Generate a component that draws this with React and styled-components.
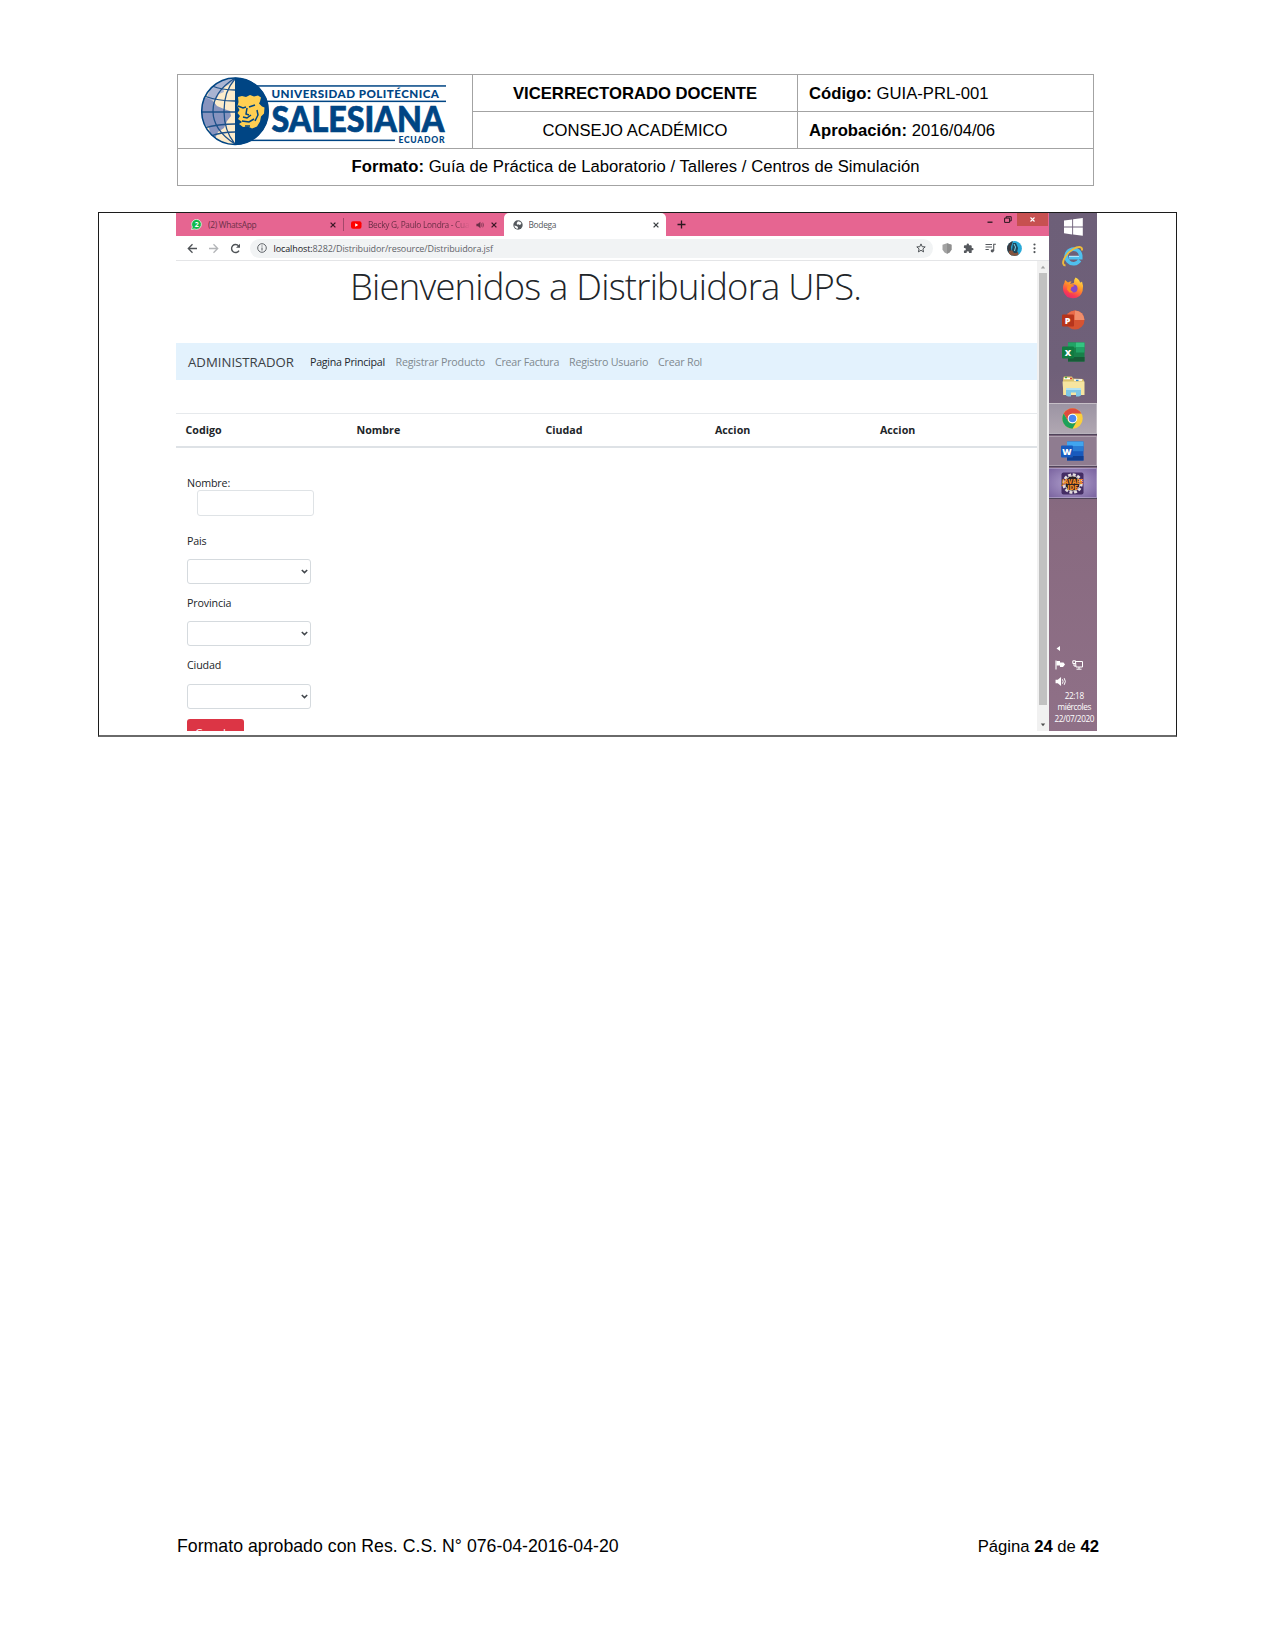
import React from "react";
import styled, { createGlobalStyle, css } from "styled-components";

const Global = createGlobalStyle`
  * { box-sizing: border-box; }
  body { margin: 0; background: #fff; }
`;

const ui = css`
  font-family: "Open Sans", "Noto Sans", sans-serif;
  white-space: nowrap;
`;

const Page = styled.div`
  width: 1275px;
  height: 1650px;
  display: flex;
  flex-direction: column;
  overflow: hidden;
  background: #fff;
  color: #000;
  font-family: "Liberation Sans", Arial, sans-serif;
  font-size: 16.67px;
`;

/* ---------- document header ---------- */
const HeaderTable = styled.div`
  width: 917px;
  height: 112px;
  margin: 74px 0 0 177px;
  display: grid;
  grid-template-columns: 294px 324px 295px;
  grid-template-rows: 36px 36px 36px;
  gap: 1px;
  padding: 1px;
  background: #a3a3a3;
`;
const Cell = styled.div`
  display: flex;
  align-items: center;
  justify-content: ${(p) => (p.$left ? "flex-start" : "center")};
  padding: ${(p) => (p.$left ? "2px 0 0 11px" : "2px 0 0")};
  background: #fff;
  white-space: pre;
  letter-spacing: ${(p) => p.$track || 0}px;
`;
const LogoCell = styled(Cell)`
  grid-row: span 2;
  justify-content: flex-start;
  padding: 0 0 1px 22px;
`;
const WideCell = styled(Cell)`
  grid-column: 1 / -1;
  padding: 0;
`;

/* ---------- frame ---------- */
const Frame = styled.div`
  width: 1079px;
  height: 525px;
  margin: 26px 0 0 98px;
  border: 1px solid #1c1c1c;
  border-bottom: 2px solid #6a6a6a;
  padding: 0 0 0 77px;
`;
const Shot = styled.div`
  width: 921px;
  height: 518px;
  display: grid;
  grid-template-columns: 873px 48px;
  overflow: hidden;
`;
const Browser = styled.div`
  display: flex;
  flex-direction: column;
  height: 518px;
  overflow: hidden;
  background: #fff;
`;

const TabStrip = styled.div`
  height: 23px;
  display: flex;
  background: #e66591;
`;
const Tab = styled.div`
  ${ui}
  width: ${(p) => p.$w}px;
  height: 23px;
  display: flex;
  align-items: center;
  padding: 0 7.5px 0 ${(p) => p.$pl}px;
  font-size: 8.4px;
  letter-spacing: ${(p) => p.$track || 0}px;
  color: ${(p) => (p.$active ? "#55585c" : "#6b2f47")};
  background: ${(p) => (p.$active ? "#fff" : "transparent")};
  border-radius: ${(p) => (p.$active ? "5px 5px 0 0" : "0")};
`;
const TabTitle = styled.span`
  flex: 1;
  min-width: 0;
  overflow: hidden;
  margin-left: 6px;
  ${(p) => p.$fade && "mask-image: linear-gradient(90deg, #000 84%, transparent);"}
`;
const TabDivider = styled.div`
  width: 1px;
  height: 13px;
  margin-top: 5px;
  background: #a3486a;
`;
const NewTab = styled.div`
  width: 30px;
  display: flex;
  align-items: center;
  justify-content: center;
`;
const WindowButtons = styled.div`
  margin-left: auto;
  padding-right: 1.5px;
  display: flex;
  height: 13px;
`;
const WinButton = styled.div`
  width: ${(p) => p.$w}px;
  height: 13px;
  display: flex;
  align-items: center;
  justify-content: center;
  background: ${(p) => (p.$close ? "#c75050" : "transparent")};
`;

const Toolbar = styled.div`
  height: 25px;
  display: flex;
  align-items: center;
  border-bottom: 1px solid #e4e5e7;
`;
const NavButtons = styled.div`
  width: 74px;
  padding-left: 10.5px;
  display: flex;
  gap: 10.7px;
`;
const Omnibox = styled.div`
  ${ui}
  width: 683px;
  height: 19px;
  display: flex;
  align-items: center;
  padding: 0 7px 0 7px;
  border-radius: 10px;
  background: #f1f3f4;
  color: #5f6368;
  font-size: 9px;
  letter-spacing: ${(p) => p.$track}px;
`;
const Url = styled.span`
  flex: 1;
  margin-left: 6.5px;
  b { font-weight: 400; color: #202124; }
`;
const Extensions = styled.div`
  flex: 1;
  display: flex;
  align-items: center;
  justify-content: space-between;
  padding: 0 13px 0 9px;
`;

const Viewport = styled.div`
  flex: 1;
  display: grid;
  grid-template-columns: 861px 12px;
  min-height: 0;
`;
const Content = styled.div`
  ${ui}
  height: 470px;
  overflow: hidden;
  color: #212529;
  font-size: 10.7px;
`;
const Heading = styled.h1`
  margin: 0;
  height: 82px;
  line-height: 50px;
  padding-left: 174px;
  font-size: 36.4px;
  font-weight: 300;
  letter-spacing: ${(p) => p.$track}px;
`;
const Navbar = styled.nav`
  height: 37px;
  display: flex;
  align-items: center;
  padding: 1px 0 0 12px;
  background: #e3f2fd;
`;
const Brand = styled.div`
  width: 122px;
  font-size: 13.2px;
  letter-spacing: ${(p) => p.$track}px;
  color: #3a4045;
`;
const NavLink = styled.div`
  width: ${(p) => p.$w}px;
  letter-spacing: ${(p) => p.$track}px;
  color: ${(p) => (p.$active ? "#23282d" : "#80898f")};
`;
const TableHead = styled.div`
  height: 35px;
  margin-top: 33px;
  padding: 0 0 1px 9.5px;
  display: grid;
  grid-template-columns: 171px 189px 169.5px 165px 1fr;
  align-items: center;
  border-top: 1px solid #e6e9ec;
  border-bottom: 2px solid #dee2e6;
  font-weight: 700;
`;
const Form = styled.div`
  padding: 28px 0 0 11px;
  display: flex;
  flex-direction: column;
  letter-spacing: ${(p) => p.$track}px;
`;
const Label = styled.label`
  height: ${(p) => p.$h || 15}px;
  line-height: 15px;
  margin-top: ${(p) => p.$mt || 0}px;
`;
const Input = styled.div`
  width: 117px;
  height: 26px;
  margin-left: 10px;
  border: 1px solid #dfe3e6;
  border-radius: 3px;
`;
const Select = styled.div`
  width: 124px;
  height: 25px;
  margin-top: 10px;
  border: 1px solid #d5dade;
  border-radius: 3px;
  display: flex;
  align-items: center;
  justify-content: flex-end;
  padding-right: 2.5px;
`;
const Submit = styled.div`
  width: 57px;
  height: 25px;
  margin-top: 10px;
  border-radius: 3px;
  background: #dc3545;
  color: #fff;
  line-height: 28px;
  text-align: center;
`;

const Scrollbar = styled.div`
  height: 470px;
  background: #f1f1f1;
  display: flex;
  flex-direction: column;
  align-items: center;
  padding: 4px 0;
`;
const Thumb = styled.div`
  width: 8px;
  height: 432px;
  margin: 4px 0 auto;
  background: #c1c1c1;
`;

/* ---------- taskbar ---------- */
const Taskbar = styled.div`
  height: 518px;
  display: flex;
  flex-direction: column;
  background: linear-gradient(#6d5f78 0%, #6f6079 30%, #886a80 58%, #8f7087 100%);
`;
const TaskButton = styled.div`
  height: ${(p) => p.$h}px;
  display: flex;
  align-items: center;
  justify-content: center;
  ${(p) =>
    p.$tone &&
    css`
      background: ${p.$tone};
      border: 1px solid rgba(255, 255, 255, 0.28);
      border-width: 1px 1px 1px 0;
      margin-bottom: 2px;
      box-shadow: 0 1px 0 #50445a;
    `}
`;
const Tray = styled.div`
  margin-top: auto;
  padding: 0 0 7px 5.5px;
  display: flex;
  flex-direction: column;
`;
const TrayRow = styled.div`
  display: flex;
  align-items: center;
  gap: 6px;
  height: ${(p) => p.$h}px;
`;
const Clock = styled.div`
  ${ui}
  margin-left: -3px;
  font-size: 8.2px;
  line-height: 11.5px;
  letter-spacing: -0.4px;
  text-align: center;
  color: #fff;
`;

/* ---------- footer ---------- */
const Footer = styled.footer`
  margin: auto 0 93px;
  padding: 0 176px 0 177px;
  display: flex;
  align-items: baseline;
  justify-content: space-between;
  font-size: ${(p) => p.$size}px;
  line-height: 20px;
`;
const Approved = styled.span`
  font-size: 17.7px;
  letter-spacing: ${(p) => p.$track}px;
`;

/* ---------- drawings ---------- */
const Logo = () => (
  <svg width="248" height="72" viewBox="200 75 248 72">
    <defs>
      <clipPath id="west"><path d="M235 77.5a33.7 33.7 0 0 0 0 67.4z" /></clipPath>
    </defs>
    <g clipPath="url(#west)">
      <rect x="200" y="75" width="36" height="72" fill="#fdeccb" />
      <path d="M211 88q9-9 19-9l5 1-7 5-5 3 1 4-5 2-3 6-6 1-4-2z" fill="#aab4d2" />
      <path d="M200 98l7 0 6 3 4 5 7 3 6 2 1 5-4 5-3 7-6 4-3 7-4-2-2-9-5-4-4-8z" fill="#8794bf" />
      <g fill="none" stroke="#1d5189" strokeWidth="1.3">
        <path d="M235 78q-22 14-22 33t22 33M235 79q-11 12-11 32t11 33" />
        <path d="M204 96q14 5 31 5M201 112h34M204 128q14-4 31-4M212 86q10 4 23 4M211 136q10-4 24-4" />
      </g>
    </g>
    <circle cx="235" cy="111.2" r="33.3" fill="none" stroke="#004584" strokeWidth="1.5" />
    <path d="M235 77.5a33.7 33.7 0 0 1 0 67.4z" fill="#004584" />
    <path d="M238 97l4 -1 4 1 4-2 4 1.500 4-1 3 2-1 4-1 2 3 3 2.500 1-.5 6-3 3-1 5-3 5-5 2-4-2-5 .5-4-3 3-2-4-3 2-3-2.500-3 2-3-2-4 1-4z" fill="#ffcf52" />
    <path d="M238 106l5 2 3-1M249 107l6-2M243 117l4 1 4-3M242 121l7 1 5-3M245 126l5 0M257 110l1 5-3 6M247 108l-1 6 3 1" fill="none" stroke="#004584" strokeWidth="1.5" />
    <g fill="#004584">
      <rect x="257" y="85.2" width="189" height="1.5" />
      <rect x="266" y="100.6" width="180" height="1.5" />
      <rect x="250" y="139.6" width="145" height="1.5" />
    </g>
    <g fill="#004584" fontFamily="Lato, sans-serif">
      <text x="271.5" y="98.2" fontSize="11.6" fontWeight="900" textLength="167.5">UNIVERSIDAD POLITÉCNICA</text>
      <text x="271.500" y="131.8" fontSize="36" fontWeight="900" stroke="#004584" strokeWidth=".7" textLength="173" lengthAdjust="spacingAndGlyphs">SALESIANA</text>
      <text x="398.5" y="142.8" fontSize="8.6" fontWeight="900" textLength="46">ECUADOR</text>
    </g>
  </svg>
);

const Svg = ({ w, h = w, vb, children }) => (
  <svg width={w} height={h} viewBox={vb || `0 0 ${w} ${h}`} style={{ flex: "none" }}>{children}</svg>
);
const Cross = ({ s = 6, color = "#3b2630", sw = 1.3 }) => (
  <Svg w={s} vb="0 0 6 6"><path d="M.6.6l4.8 4.8M5.4.6L.6 5.4" stroke={color} strokeWidth={sw} /></Svg>
);
const WhatsApp = () => (
  <Svg w={11}>
    <path d="M5.6.4a5 5 0 1 1-2.4 9.5L.5 10.600l.8-2.700A5 5 0 0 1 5.600.4z" fill="#12b94b" stroke="#e9f7ec" strokeWidth=".8" />
    <text x="5.600" y="8" fontSize="7" fontWeight="700" fontFamily="Open Sans, sans-serif" fill="#fff" textAnchor="middle">2</text>
  </Svg>
);
const YouTube = () => (
  <Svg w={11} h={8}><rect width="10.500" height="7.500" y=".3" rx="2" fill="#f00" /><path d="M4.200 2.300v3.500l3-1.700z" fill="#fff" /></Svg>
);
const Speaker = ({ s = 8, color = "#6b2f47" }) => (
  <Svg w={s} vb="0 0 10 10"><path d="M.5 3.500h2L5.500.8v8.400l-3-2.700h-2z" fill={color} /><path d="M6.800 3q1.200 2 0 4M8.400 2q2 3 0 6" fill="none" stroke={color} strokeWidth=".9" /></Svg>
);
const Globe = () => (
  <Svg w={10}><circle cx="5" cy="5" r="4.700" fill="#54585d" /><path d="M1.300 5.500l2 .4 1.700 1.200-.4 1.800Q1.800 8.500 1.300 5.500zM5 1.200l2.500.8.900 1.700-1.500 1.200-1.600-.6-1.300.4L3.700 3z" fill="#fff" /></Svg>
);
const Arrow = ({ flip, color }) => (
  <Svg w={11}>
    <path transform={flip ? "matrix(-1 0 0 1 11 0)" : undefined} d="M10 5.500H1.500M5.500 1.300L1.300 5.500l4.200 4.200" fill="none" stroke={color} strokeWidth="1.300" />
  </Svg>
);
const Reload = () => (
  <Svg w={11}><path d="M9 7.600A4 4 0 1 1 8.600 2.900" fill="none" stroke="#4f5357" strokeWidth="1.400" /><path d="M10 .8v4H6z" fill="#4f5357" /></Svg>
);
const Info = () => (
  <Svg w={10}><circle cx="5" cy="5" r="4.300" fill="none" stroke="#5f6368" /><path d="M5 4.400v3M5 2.400v1.100" stroke="#5f6368" strokeWidth="1.100" /></Svg>
);
const Star = () => (
  <Svg w={10}><path d="M5 .9l1.200 2.800 3 .2-2.300 2 .7 3L5 7.300 2.400 8.900l.7-3L.8 3.900l3-.2z" fill="none" stroke="#4f5357" strokeWidth="1" /></Svg>
);
const Shield = () => (
  <Svg w={10} h={11}><path d="M5 .2l4.500 1.500v5L7.500 9.500 5 10.800 2.500 9.500l-2-2.800v-5z" fill="#a3a3a3" /><path d="M5 .2l4.500 1.500v5L7.500 9.500 5 10.800z" fill="#8f8f8f" /></Svg>
);
const Puzzle = () => (
  <Svg w={11} vb="0 0 24 24"><path d="M20.500 11H19V7a2 2 0 0 0-2-2h-4V3.500a2.500 2.500 0 0 0-5 0V5H4a2 2 0 0 0-2 2v3.800h1.500a2.700 2.700 0 0 1 0 5.400H2V20a2 2 0 0 0 2 2h3.800v-1.500a2.700 2.700 0 0 1 5.400 0V22H17a2 2 0 0 0 2-2v-4h1.500a2.500 2.500 0 0 0 0-5z" fill="#56595e" /></Svg>
);
const Playlist = () => (
  <Svg w={11} h={10}><path d="M.5 1.500H7M.5 4H7M.5 6.500h3.300M8.700 8V1.300h2.200" fill="none" stroke="#56595e" strokeWidth="1.100" /><circle cx="7.300" cy="7.800" r="1.600" fill="#56595e" /></Svg>
);
const Avatar = () => (
  <Svg w={15}>
    <clipPath id="av"><circle cx="7.500" cy="7.500" r="7.400" /></clipPath>
    <g clipPath="url(#av)">
      <rect width="15" height="15" fill="#28a9d8" />
      <path d="M0 0h6L4 6l1 9H0z" fill="#3b3a3f" />
      <path d="M2 10l4-1 5 2 1 4H2z" fill="#83543f" />
      <path d="M6 2l3 0 2 5-1 5-3 0-2-3z" fill="#1c475c" />
      <path d="M7 3l1.500 3-1 4" fill="none" stroke="#8ed3e4" />
    </g>
  </Svg>
);
const Dots = () => (
  <Svg w={3} h={11}><g fill="#4f5357"><circle cx="1.500" cy="1.500" r="1.100" /><circle cx="1.500" cy="5.300" r="1.100" /><circle cx="1.500" cy="9.100" r="1.100" /></g></Svg>
);
const Chevron = () => (
  <Svg w={7} h={5}><path d="M.8 1l2.700 2.600L6.200 1" fill="none" stroke="#41464b" strokeWidth="1.500" /></Svg>
);
const Tri = ({ down }) => (
  <Svg w={6} h={4}><path d={down ? "M.8.500h4.400L3 3.300z" : "M.8 3.500h4.400L3 .7z"} fill={down ? "#505050" : "#a3a3a3"} /></Svg>
);

const WindowsIcon = () => (
  <Svg w={19} h={18}><path d="M0 2.600l8.200-1.200v7.100H0zM9.100 1.200L18.800 0v8.500H9.100zM0 9.400h8.200v7L0 15.200zM9.100 9.400h9.700v8.400l-9.700-1.400z" fill="#fff" /></Svg>
);
const IE = () => (
  <Svg w={22} vb="0 0 22 22">
    <path d="M18.500 14.700a7.300 7.300 0 1 1 1-4.700v2.300H7.500" fill="none" stroke="#4fc0ee" strokeWidth="3.600" transform="translate(-.8 .5)" />
    <path d="M7 11.300h10" stroke="#c6efff" strokeWidth="1" />
    <path d="M3.500 20.500C-2 20 2.500 9.500 11 4.300c5-3.200 9.500-3.400 9 1.200" fill="none" stroke="#edbb3c" strokeWidth="1.900" />
  </Svg>
);
const Firefox = () => (
  <Svg w={22} vb="0 0 22 22">
    <defs><linearGradient id="ff" x1=".8" y1="0" x2=".3" y2="1"><stop offset="0" stopColor="#ffe64a" /><stop offset=".45" stopColor="#ff9328" /><stop offset=".8" stopColor="#fb3b52" /><stop offset="1" stopColor="#e22a72" /></linearGradient></defs>
    <path d="M13.500.5q4 2 4.500 5 1.500 0 2-1 2 5 .6 9.500A10 10 0 0 1 1.500 14.500Q0 10 2.500 5.500L3 3l3 2.500Q8 4 9.500 4.500L8 7l4-1q-.5-3 1.500-5.500z" fill="url(#ff)" />
    <circle cx="11.500" cy="11.500" r="4" fill="#8448c8" />
    <path d="M5.500 9l5-1.500 2 1.500-3 1-1 3 3 2.500-4 0-2.500-3z" fill="#ff8a22" />
  </Svg>
);
const Letter = ({ x = 5.600, y = 14, children }) => (
  <text x={x} y={y} fontSize="9" fontWeight="800" fontFamily="Open Sans, sans-serif" fill="#fff" textAnchor="middle">{children}</text>
);
const PowerPoint = () => (
  <Svg w={23} h={20}>
    <circle cx="13" cy="10" r="9.500" fill="#d65331" /><path d="M13 .5A9.500 9.500 0 0 1 22.500 10H13z" fill="#f08e6c" /><path d="M3.500 10A9.500 9.500 0 0 1 13 .5V10z" fill="#e96c4a" />
    <rect y="4.500" width="12" height="12" rx="1" fill="#b7351c" /><Letter y={13.800}>P</Letter>
  </Svg>
);
const Excel = () => (
  <Svg w={23} h={20}>
    <rect x="6" y=".5" width="16.500" height="19" fill="#18804a" /><rect x="6" y=".5" width="8" height="5" fill="#22a366" /><rect x="14" y=".5" width="8.500" height="5" fill="#33c481" /><rect x="14" y="5.500" width="8.500" height="5" fill="#21a165" /><rect x="6" y="15" width="16.500" height="4.500" fill="#165c37" />
    <rect y="4.500" width="12" height="12" rx="1" fill="#107c41" /><Letter x={6} y={13.800}>X</Letter>
  </Svg>
);
const Explorer = () => (
  <Svg w={23} h={21}>
    <path d="M1 2l1-1.500h8L11 2.500l10 .5 1 2v14H1z" fill="#dcc36d" /><path d="M2 2.500h8M12 4h8" stroke="#fff" strokeWidth="1.400" /><path d="M3 1.500h2" stroke="#45a543" strokeWidth="1.500" /><path d="M8 2.500h2" stroke="#d84532" strokeWidth="1.500" /><path d="M14 4.500h2.500" stroke="#3186cc" strokeWidth="1.500" />
    <path d="M.5 5.500h22V19H1.500z" fill="#f6e5a0" /><path d="M4 12h15v7.500l-2 1h-3v-4H9v4H6l-2-1z" fill="#7ec7e6" /><path d="M4 13h15" stroke="#c6ebf6" strokeWidth="1.500" />
  </Svg>
);
const Chrome = () => (
  <Svg w={21} vb="-10.500 -10.500 21 21">
    <circle r="10.200" fill="#fbcf3d" />
    <path d="M-8.830-5.100A10.200 10.200 0 0 1 8.830-5.100H0A5.100 5.100 0 0 0-4.420-2.550L-4.420 2.550z" fill="#dd4b3e" />
    <path d="M-8.830-5.100A10.200 10.200 0 0 0 0 10.200L4.420 2.550A5.100 5.100 0 0 1-4.420 2.550z" fill="#1da05c" />
    <circle r="4.800" fill="#fff" /><circle r="3.800" fill="#4a86ee" />
  </Svg>
);
const Word = () => (
  <Svg w={23} h={20}>
    <rect x="6" y=".5" width="16.500" height="19" fill="#185abd" /><rect x="6" y=".5" width="16.500" height="5" fill="#41a5ee" /><rect x="6" y="5.500" width="16.500" height="4.700" fill="#2b7cd3" /><rect x="6" y="15" width="16.500" height="4.500" fill="#103f91" />
    <rect y="4.500" width="12" height="12" rx="1" fill="#185abd" /><Letter x={6} y={13.800}>W</Letter>
  </Svg>
);
const JavaIde = () => (
  <Svg w={23} h={23}>
    <rect x=".5" y=".5" width="22" height="22" rx="2" fill="#442d64" />
    <circle cx="11.500" cy="11.500" r="9" fill="none" stroke="#e5e0e0" strokeWidth="2.500" strokeDasharray="3 1.710" />
    <circle cx="11.500" cy="11.500" r="7.600" fill="#2b2023" stroke="#d7d0cf" strokeWidth="1" />
    <g fontFamily="Open Sans, sans-serif" fontWeight="800" fill="#f28a26" textAnchor="middle">
      <text x="11.500" y="11.500" fontSize="6" textLength="21" lengthAdjust="spacingAndGlyphs">JAVAEE</text>
      <text x="11.500" y="17.500" fontSize="6.500">IDE</text>
    </g>
  </Svg>
);

const tabs = [
  { w: 167, pl: 15, icon: <WhatsApp />, title: "(2) WhatsApp", track: -0.3 },
  { w: 160, pl: 7, icon: <YouTube />, title: "Becky G, Paulo Londra - Cuando", sound: true, track: -0.3 },
  { w: 162, pl: 8.5, icon: <Globe />, title: "Bodega", active: true, track: -0.3 },
];
const links = [
  { t: "Pagina Principal", w: 85.5, track: -0.27, active: true },
  { t: "Registrar Producto", w: 99.5, track: -0.2 },
  { t: "Crear Factura", w: 74, track: -0.25 },
  { t: "Registro Usuario", w: 89, track: -0.2 },
  { t: "Crear Rol", w: 60, track: -0.2 },
];
const pinned = [
  { h: 27, icon: <WindowsIcon /> },
  { h: 31, icon: <IE /> },
  { h: 34, icon: <Firefox /> },
  { h: 30, icon: <PowerPoint /> },
  { h: 34, icon: <Excel /> },
  { h: 34, icon: <Explorer /> },
  { h: 31, icon: <Chrome />, tone: "linear-gradient(#9c94a3, #b0a7b2)" },
  { h: 30, icon: <Word />, tone: "#8f7c90" },
  { h: 30, icon: <JavaIde />, tone: "radial-gradient(#b3a3cf, #7a64a0)" },
];

export default function App() {
  return (
    <Page>
      <Global />
      <HeaderTable>
        <LogoCell><Logo /></LogoCell>
        <Cell><b>VICERRECTORADO DOCENTE</b></Cell>
        <Cell $left><b>Código:</b> GUIA-PRL-001</Cell>
        <Cell>CONSEJO ACADÉMICO</Cell>
        <Cell $left><b>Aprobación:</b> 2016/04/06</Cell>
        <WideCell $track={0.035}><b>Formato:</b> Guía de Práctica de Laboratorio / Talleres / Centros de Simulación</WideCell>
      </HeaderTable>

      <Frame>
        <Shot>
          <Browser>
            <TabStrip>
              {tabs.map((t, i) => (
                <React.Fragment key={t.title}>
                  <Tab $w={t.w} $pl={t.pl} $active={t.active} $track={t.track}>
                    {t.icon}
                    <TabTitle $fade={t.sound}>{t.title}</TabTitle>
                    {t.sound && <Svg w={6} h={1} />}
                    {t.sound && <Speaker />}
                    {t.sound && <Svg w={7} h={1} />}
                    <Cross color={t.active ? "#3c4043" : "#3b1826"} />
                  </Tab>
                  {i === 0 && <TabDivider />}
                </React.Fragment>
              ))}
              <NewTab><Svg w={9}><path d="M4.500.5v8M.5 4.500h8" stroke="#2b1820" strokeWidth="1.300" /></Svg></NewTab>
              <WindowButtons>
                <WinButton $w={18}><Svg w={6} h={6}><path d="M.5 5.200h5" stroke="#2b1820" strokeWidth="1.300" /></Svg></WinButton>
                <WinButton $w={18}><Svg w={8} h={7}><path d="M.6 2.100h5v4.300h-5zM2.200 2V.7h5v4.200H5.800" fill="none" stroke="#2b1820" strokeWidth="1" /></Svg></WinButton>
                <WinButton $w={31} $close><Cross s={5} color="#fff" /></WinButton>
              </WindowButtons>
            </TabStrip>
            <Toolbar>
              <NavButtons><Arrow color="#4f5357" /><Arrow flip color="#b3b5b8" /><Reload /></NavButtons>
              <Omnibox $track={-0.1}>
                <Info />
                <Url><b>localhost:</b>8282/Distribuidor/resource/Distribuidora.jsf</Url>
                <Star />
              </Omnibox>
              <Extensions><Shield /><Puzzle /><Playlist /><Avatar /><Dots /></Extensions>
            </Toolbar>
            <Viewport>
              <Content>
                <Heading $track={-0.77}>Bienvenidos a Distribuidora UPS.</Heading>
                <Navbar>
                  <Brand $track={0}>ADMINISTRADOR</Brand>
                  {links.map((l) => <NavLink key={l.t} $w={l.w} $active={l.active} $track={l.track}>{l.t}</NavLink>)}
                </Navbar>
                <TableHead>
                  <span>Codigo</span><span>Nombre</span><span>Ciudad</span><span>Accion</span><span>Accion</span>
                </TableHead>
                <Form $track={-0.15}>
                  <Label $h={14}>Nombre:</Label>
                  <Input />
                  <Label $mt={18}>Pais</Label>
                  <Select><Chevron /></Select>
                  <Label $mt={12}>Provincia</Label>
                  <Select><Chevron /></Select>
                  <Label $mt={12} $h={16}>Ciudad</Label>
                  <Select><Chevron /></Select>
                  <Submit>Guardar</Submit>
                </Form>
              </Content>
              <Scrollbar><Tri /><Thumb /><Tri down /></Scrollbar>
            </Viewport>
          </Browser>

          <Taskbar>
            {pinned.map((p, i) => <TaskButton key={i} $h={p.h} $tone={p.tone}>{p.icon}</TaskButton>)}
            <Tray>
              <TrayRow $h={16}><Svg w={6} h={7}><path d="M5 1v5L1.500 3.500z" fill="#fff" /></Svg></TrayRow>
              <TrayRow $h={16}>
                <Svg w={11} h={10}><path d="M1 .5v9" stroke="#fff" strokeWidth="1.100" /><path d="M1.500 1h3.500v1.500h3.500l1.500 2-2 2.500H5V5.500H1.500z" fill="#fff" /></Svg>
                <Svg w={11} h={10}><path d="M3.500 1.500h7v5.500h-6.500zM7 7v2M4.500 9.200h5M.8.800h2.700v2.700H.8zM2 3.500V6h2" fill="none" stroke="#fff" strokeWidth="1" /></Svg>
              </TrayRow>
              <TrayRow $h={17}><Speaker s={11} color="#fff" /></TrayRow>
              <Clock>22:18<br />miércoles<br />22/07/2020</Clock>
            </Tray>
          </Taskbar>
        </Shot>
      </Frame>

      <Footer $size={16.67}>
        <Approved $track={0.02}>Formato aprobado con Res. C.S. N° 076-04-2016-04-20</Approved>
        <span>Página <b>24</b> de <b>42</b></span>
      </Footer>
    </Page>
  );
}
